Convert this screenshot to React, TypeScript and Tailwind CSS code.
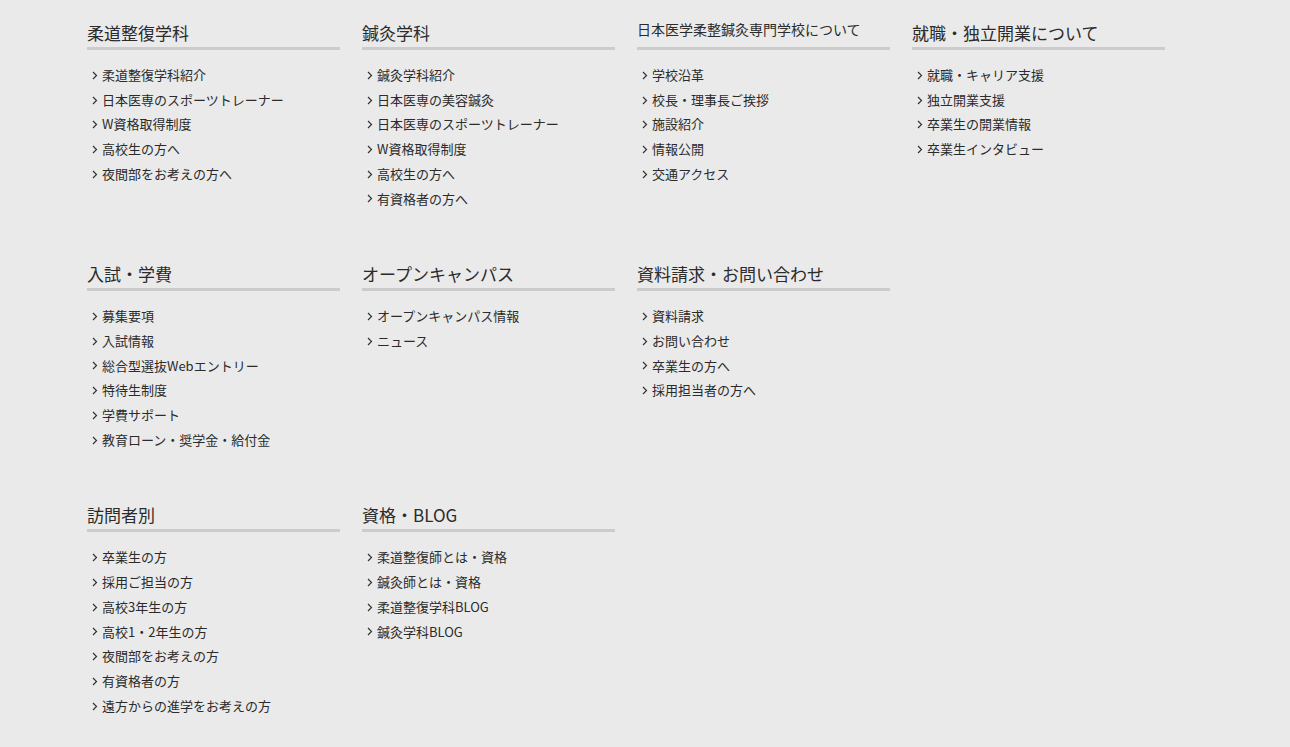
const sections: { title: string; small?: boolean; items: string[] }[] = [
  { title: '柔道整復学科', items: ['柔道整復学科紹介', '日本医専のスポーツトレーナー', 'W資格取得制度', '高校生の方へ', '夜間部をお考えの方へ'] },
  { title: '鍼灸学科', items: ['鍼灸学科紹介', '日本医専の美容鍼灸', '日本医専のスポーツトレーナー', 'W資格取得制度', '高校生の方へ', '有資格者の方へ'] },
  { title: '日本医学柔整鍼灸専門学校について', small: true, items: ['学校沿革', '校長・理事長ご挨拶', '施設紹介', '情報公開', '交通アクセス'] },
  { title: '就職・独立開業について', items: ['就職・キャリア支援', '独立開業支援', '卒業生の開業情報', '卒業生インタビュー'] },
  { title: '入試・学費', items: ['募集要項', '入試情報', '総合型選抜Webエントリー', '特待生制度', '学費サポート', '教育ローン・奨学金・給付金'] },
  { title: 'オープンキャンパス', items: ['オープンキャンパス情報', 'ニュース'] },
  { title: '資料請求・お問い合わせ', items: ['資料請求', 'お問い合わせ', '卒業生の方へ', '採用担当者の方へ'] },
  { title: '', items: [] },
  { title: '訪問者別', items: ['卒業生の方', '採用ご担当の方', '高校3年生の方', '高校1・2年生の方', '夜間部をお考えの方', '有資格者の方', '遠方からの進学をお考えの方'] },
  { title: '資格・BLOG', items: ['柔道整復師とは・資格', '鍼灸師とは・資格', '柔道整復学科BLOG', '鍼灸学科BLOG'] },
];

const Chevron = () => (
  <svg width="6" height="9" viewBox="0 0 6 9" className="shrink-0 text-[#333]">
    <path d="M1 1l3.5 3.5L1 8" fill="none" stroke="currentColor" strokeWidth="1.2" />
  </svg>
);

export default function App() {
  return (
    <div
      className="min-h-[747px] w-full bg-[#eaeaea] text-[#2b2b2b] pl-[87px] pt-[21px] pb-[20px]"
      style={{ fontFamily: '"Noto Sans CJK JP", "Noto Sans", sans-serif' }}
    >
      <div className="grid grid-cols-[repeat(4,253px)] gap-x-[22px] gap-y-[51px]">
        {sections.map((s, i) => (
          <div key={i}>
            {s.title && (
              <>
                <h3
                  className={`h-[26px] border-b-[3px] border-[#cccccc] box-content ${
                    s.small ? 'text-[14px] leading-[16px]' : 'text-[17px] leading-[24px]'
                  }`}
                >
                  {s.title}
                </h3>
                <ul className="mt-[13px] pl-[5px]">
                  {s.items.map(item => (
                    <li key={item} className="flex items-center gap-[4px] text-[13px] leading-[24.7px]">
                      <Chevron />
                      <span>{item}</span>
                    </li>
                  ))}
                </ul>
              </>
            )}
          </div>
        ))}
      </div>
    </div>
  );
}
